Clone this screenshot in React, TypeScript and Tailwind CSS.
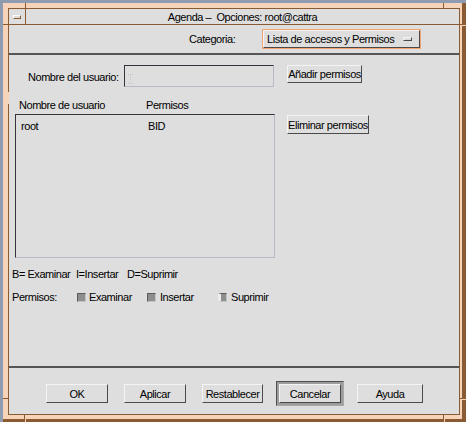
import React from "react";

// CDE / Motif style dialog: Agenda - Opciones
const Btn = ({ label, className = "" }: { label: string; className?: string }) => (
    <div
        className={`flex items-center justify-center bg-[#dedede] border border-t-[#f4f4f4] border-l-[#f4f4f4] border-b-[#4a4a4a] border-r-[#4a4a4a] ${className}`}
    >
        {label}
    </div>
);

const Check = ({ half = false }: { half?: boolean }) => (
    <span
        className={`block w-[9px] h-[9px] bg-[#8e8e8e] border border-t-[#5c5c5c] border-l-[#5c5c5c] border-b-[#c4c4c4] border-r-[#c4c4c4] ${half ? "border-l-[3px] border-l-[#ececec]" : ""}`}
    />
);

export default function App() {
    return (
        <div className="relative w-[466px] h-[422px] overflow-hidden bg-[#8e9bb0] pt-[3px] pl-[3px] font-['Liberation_Sans',Arial,sans-serif] text-[11px] tracking-[-0.45px] text-black leading-[14px]">
            <div className="w-[463px] h-[419px] bg-[#f6d3b9] pl-[5px] pt-[5px] pr-[2px] pb-[4px] border-r-[4px] border-b-[3px] border-[#8a5a32] border-l-0 border-t-0">
                <div className="w-full h-full border border-[#8a5a32] flex flex-col">
                    {/* title bar */}
                    <div className="h-[16px] border-b border-[#8a5a32] flex bg-[#dedede]">
                        <div className="w-[17px] border-r border-[#8a5a32] flex items-center justify-center">
                            <span className="block w-[8px] h-[4px] border border-t-white border-l-white border-b-[#8a5a32] border-r-[#8a5a32]" />
                        </div>
                        <div className="flex-1 flex items-center justify-center whitespace-pre">
                            Agenda –  Opciones: root@cattra
                        </div>
                    </div>

                    {/* content */}
                    <div className="flex-1 bg-[#dedede] flex flex-col">
                        <div className="h-[28px] flex items-start pt-[4px]">
                            <div className="ml-[180px] w-[73px] h-[20px] flex items-center">Categoria:</div>
                            <div className="w-[159px] h-[20px] border border-[#f2a46e]">
                                <div className="w-full h-full border border-t-[#f4f4f4] border-l-[#f4f4f4] border-b-[#4a4a4a] border-r-[#4a4a4a] flex items-center pl-[3px] pr-[7px]">
                                    <span className="flex-1">Lista de accesos y Permisos</span>
                                    <span className="block w-[9px] h-[4px] border border-t-[#f4f4f4] border-l-[#f4f4f4] border-b-[#4a4a4a] border-r-[#4a4a4a]" />
                                </div>
                            </div>
                        </div>
                        <div className="h-[2px] bg-[#555]" />

                        <div className="mt-[10px] flex items-start">
                            <div className="ml-[19px] w-[96px] h-[22px] pt-[2px] flex items-center">Nombre del usuario:</div>
                            <div className="w-[150px] h-[22px] border border-t-[#34343c] border-l-[#34343c] border-b-[#b6bac8] border-r-[#b6bac8] pl-[3px] pt-[8px]">
                                <svg width="6" height="10" viewBox="0 0 6 10">
                                    <path d="M0 0.5h5M0 9.5h5M2.5 1v8" stroke="#c8c8c8" strokeWidth="1" strokeDasharray="1 1" fill="none" />
                                </svg>
                            </div>
                            <Btn label="Añadir permisos" className="ml-[13px] w-[75px] h-[18px]" />
                        </div>

                        <div className="mt-[11px] h-[14px] flex items-center">
                            <span className="ml-[10px] w-[127px]">Nombre de usuario</span>
                            <span>Permisos</span>
                        </div>

                        <div className="mt-[2px] flex items-start">
                            <div className="ml-[6px] w-[260px] h-[144px] border border-t-[#34343c] border-l-[#34343c] border-b-[#b6bac8] border-r-[#b6bac8] pl-[5px] pt-[4px]">
                                <div className="h-[14px] flex items-center">
                                    <span className="w-[127px]">root</span>
                                    <span>BID</span>
                                </div>
                            </div>
                            <Btn label="Eliminar permisos" className="ml-[12px] mt-[1px] w-[82px] h-[19px]" />
                        </div>

                        <div className="mt-[9px] h-[14px] flex items-center">
                            <span className="ml-[3px] w-[64px]">B= Examinar</span>
                            <span className="w-[51px]">I=Insertar</span>
                            <span>D=Suprimir</span>
                        </div>

                        <div className="mt-[9px] h-[14px] flex items-center">
                            <span className="ml-[3px] w-[65px]">Permisos:</span>
                            <Check />
                            <span className="ml-[3px] w-[58px]">Examinar</span>
                            <Check />
                            <span className="ml-[4px] w-[58px]">Insertar</span>
                            <Check half />
                            <span className="ml-[4px]">Suprimir</span>
                        </div>

                        <div className="mt-auto h-[2px] bg-[#555]" />
                        <div className="mt-[13px] h-[25px] mb-[8px] flex items-center">
                            <Btn label="OK" className="ml-[37px] w-[62px] h-[19px]" />
                            <Btn label="Aplicar" className="ml-[16px] w-[62px] h-[19px]" />
                            <Btn label="Restablecer" className="ml-[16px] w-[61px] h-[19px]" />
                            <div className="ml-[13px] w-[68px] h-[25px] border border-t-[#505050] border-l-[#505050] border-b-[#a8a8a8] border-r-[#a8a8a8] bg-[#9c9c9c] p-[2px]">
                                <Btn label="Cancelar" className="w-full h-full" />
                            </div>
                            <Btn label="Ayuda" className="ml-[13px] w-[66px] h-[19px]" />
                        </div>
                    </div>
                </div>
            </div>

            {/* frame resize-corner ticks */}
            <span className="absolute left-[25px] top-[3px] w-px h-[5px] bg-[#8a5a32]" />
            <span className="absolute left-[443px] top-[3px] w-px h-[5px] bg-[#8a5a32]" />
            <span className="absolute left-[3px] top-[24px] w-[5px] h-px bg-[#8a5a32]" />
            <span className="absolute left-[460px] top-[24px] w-[2px] h-px bg-[#8a5a32]" />
            <span className="absolute left-[462px] top-[25px] w-[4px] h-px bg-[#f6d3b9]" />
            <span className="absolute left-[3px] top-[398px] w-[5px] h-px bg-[#8a5a32]" />
            <span className="absolute left-[460px] top-[398px] w-[2px] h-px bg-[#8a5a32]" />
            <span className="absolute left-[462px] top-[399px] w-[4px] h-px bg-[#f6d3b9]" />
            <span className="absolute left-[24px] top-[415px] w-px h-[4px] bg-[#8a5a32]" />
            <span className="absolute left-[25px] top-[419px] w-px h-[3px] bg-[#f6d3b9]" />
            <span className="absolute left-[443px] top-[415px] w-px h-[4px] bg-[#8a5a32]" />
            <span className="absolute left-[444px] top-[419px] w-px h-[3px] bg-[#f6d3b9]" />
            <span className="absolute left-[8px] top-[92px] w-px h-[12px] bg-[#f6d3b9]" />
        </div>
    );
}
